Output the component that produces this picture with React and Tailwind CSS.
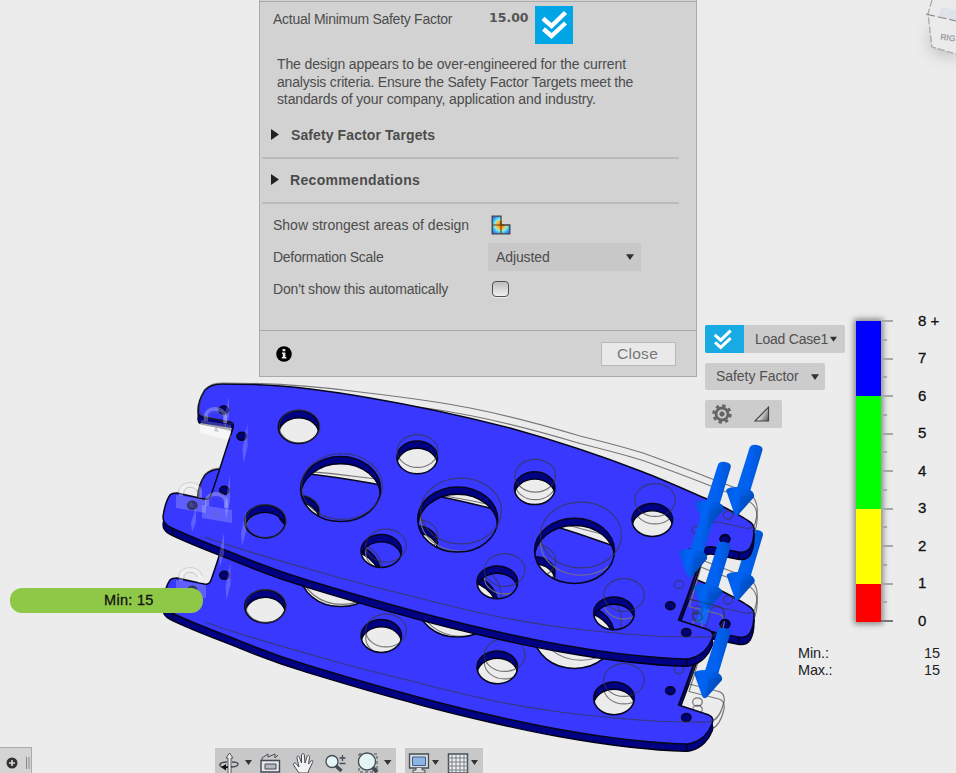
import React from 'react';

const FACE =
  'M198 411 C198 403 201 396 205 390 C210 385 215 384 222 384 C258 384 288 386 310 389 C330 391.3 350 394.5 370 398 C420 406.500 465 416.500 510 428 C555 440.500 602 456 643 472 C665 480.500 686 490 707 499 C722 506 738 514 747 520 C752 523 755 526 754 530 C754 537 753 543 750 548 C747 552 743 553 738 552 L713 547 C707 546 704 548 702 552 C700 562 688 595 678.5 620 L706 629 C712 631 714 633 712 639 C709 647 702 655 692 658 C689 659 689 659 686 659 C645 658 602 652 560 644.500 C537 640.500 514 635.500 490 630 C462 623.500 435 617 407 609 C375 600.500 340 590 307 580 C284 573 262 565 240 556 C215 546 190 537 170 527 C164 524 163 521 163 517 C164 509 166 501 170 495 C172 493 174 493 177 493 L204 499 C208 500 210 498 211 495 C216 482 224 455 233 428 C234 424 233 423 230 422 L203 417 C199 416 198 415 198 411 Z';

const GHOST =
  'M233 424 L203 416 C197 414 199 402 204 391 C209 384 216 383 224 383 C270 383 315 386 360 392 C398 396.500 435 401 470 408 C508 415.500 545 425.500 580 436 C602 441.500 624 447 643 453 C665 461 687 469 707 477 L733 487 C744 491 752 494 755 500 C759 507 757 517 755 524 C753 528 750 529 745 528 L718 522 C713 521 711 523 710 526 C705 545 697 575 689 599 L717 606 C723 607 725 611 724 617 C722 625 718 634 712 636 C706 638 700 637 693 637 C670 637 648 636 627 634 C605 632 580 630 560 627 C537 624 513 620 490 615 C462 609 434 602 407 595 C378 588 350 581 323 573 C290 564 240 550 205 537';

const SMALL = [
  [298.6, 427], [417.2, 457.4], [534.7, 488.2], [652.3, 520],
  [265, 521.5], [381.3, 551], [497.3, 582.3], [614, 613.3],
];
const BIG = [[340.6, 489], [457.7, 519.5], [574.5, 550.8]];
const DOTS = [
  [223.7, 410], [241.7, 436.3], [224.3, 490.3], [192.3, 505.3],
  [725, 539.5], [691.5, 553], [670.3, 605.7], [686.3, 632.5],
];
const GHOST_SMALL = [
  [299.5, 426.5], [417.5, 451], [535.3, 475.7], [655, 500],
  [266, 521], [386, 545.5], [504.7, 570], [624, 595],
];
const GHOST_BIG = [[342, 486.5], [461, 511], [581, 535]];
const GHOST_DOTS = [[728, 515], [697, 530], [679, 584.5], [697.5, 617]];

const ring = (x, y, rx, ry) =>
  `M${x - rx} ${y} a${rx} ${ry} 0 1 0 ${rx * 2} 0 a${rx} ${ry} 0 1 0 ${-rx * 2} 0 Z`;

const PLATE = [
  FACE,
  ...SMALL.map(([x, y]) => ring(x, y, 20.3, 16.4)),
  ...BIG.map(([x, y]) => ring(x, y, 40, 32.6)),
].join(' ');

const GHOST_ALL = [
  GHOST,
  ...GHOST_SMALL.map(([x, y]) => ring(x, y, 20.3, 16.4)),
  ...GHOST_BIG.map(([x, y]) => ring(x, y, 40.5, 32.8)),
  ...GHOST_DOTS.map(([x, y]) => ring(x, y, 4.8, 4.2)),
].join(' ');

function Plate({ y }) {
  return (
    <g transform={`translate(0 ${y})`} strokeLinejoin="round">
      <path d={GHOST_ALL} transform="translate(0 7.5)" fill="none" stroke="#777" strokeWidth="1.1" />
      <g fill="#000082" fillRule="evenodd">
        <path d={PLATE} transform="translate(0 7.3)" stroke="#000014" strokeWidth="1.4" />
        <path d={PLATE} transform="translate(0 5)" />
        <path d={PLATE} transform="translate(0 2.5)" />
        <path d={PLATE} fill="#3838ff" stroke="#06061c" strokeWidth="1.5" />
      </g>
      <path d="M173 528 V536 M687 659 V666 M739 552 V560" stroke="#000" />
      {DOTS.map(([cx, cy]) => (
        <ellipse key={cx} cx={cx} cy={cy} rx="4.7" ry="4" fill="#000078" stroke="#05051e" strokeWidth="1.5" />
      ))}
      <path d={GHOST_ALL} fill="none" stroke="#383838" strokeOpacity="0.65" strokeWidth="1.2" />
    </g>
  );
}

function Arrow({ x, y, start = -69 }) {
  const sx = (-start * 20) / 69;
  return (
    <g transform={`translate(${x} ${y})`}>
      <path
        d={`M${sx - 6.5} ${start + 2} Q${sx - 5} ${start - 2} ${sx + 1} ${start - 1} Q${sx + 7} ${start} ${sx + 6.5} ${start + 4} L13 -20 L0 -24 Z`}
        fill="url(#shaft)"
      />
      <path d="M-10 -25 Q-8 -28 1 -28 L14 -25 Q19 -22 18 -18 L3 -1 Q0 2 -2 -2 Z" fill="url(#head)" />
      <path d="M5 -19 L18 -20 L18 -18 L2 0 Z" fill="#0048b4" opacity="0.4" />
    </g>
  );
}

function Lock({ x, y }) {
  return (
    <g transform={`translate(${x} ${y})`}>
      <path d="M-14 0 L16 5 L16 18 L-14 13 Z" fill="#fff" opacity="0.2" />
      <path d="M-9 1 V-5 C-7 -13 8 -13 10 -4 V3" fill="none" stroke="#fff" strokeWidth="4" opacity="0.28" />
      <path d="M-11 0 V-5 C-9 -15 10 -15 12 -4 M-6 0 V-4 C-5 -9 6 -9 7 -3" fill="none" stroke="#777" strokeWidth="0.7" opacity="0.4" />
      <path d="M-1 11 L1 6 L4 12 Z" fill="#777" opacity="0.35" />
    </g>
  );
}

const GLINTS = [[229, 397, 32], [247.5, 423, 40], [230, 475, 44], [196, 507, 25], [246, 510, 36], [224, 533, 34], [230.5, 562, 38]];

function Model() {
  return (
    <svg className="absolute inset-0 h-[773px] w-[956px]" viewBox="0 0 956 773">
      <defs>
        <linearGradient id="shaft" x1="0" x2="1" y1="0.4" y2="0.6">
          <stop offset="0" stopColor="#0a62dc" />
          <stop offset="0.45" stopColor="#0062f5" />
          <stop offset="1" stopColor="#0052c8" />
        </linearGradient>
        <linearGradient id="head" x1="0" x2="1" y1="0" y2="0.3">
          <stop offset="0" stopColor="#0058d8" />
          <stop offset="0.4" stopColor="#0064f8" />
          <stop offset="1" stopColor="#0050c4" />
        </linearGradient>
        <filter id="soft" x="-60%" y="-60%" width="220%" height="220%">
          <feGaussianBlur stdDeviation="8" />
        </filter>
      </defs>

      <Plate y={85} />
      <Arrow x={736.5} y={600} />
      <Plate y={0} />

      {GLINTS.map(([x, y, h]) => (
        <path key={`${x}-${y}`} d={`M${x} ${y} L${x - 5} ${y + h * 0.65} L${x - 4} ${y + h} L${x} ${y + h * 0.6} Z`} fill="#fff" opacity="0.2" />
      ))}
      <path d="M200 423 L232 428 L228 440 L200 433 Z" fill="#fff" opacity="0.55" />
      <Lock x={215} y={420} />
      <Lock x={190} y={495} />
      <Lock x={216} y={505} />
      <Lock x={190} y={580} />

      <Arrow x={689} y={577} />
      <Arrow x={705.5} y={528} start={-65} />
      <Arrow x={736} y={515} />
      <Arrow x={704} y={612} />
      <Arrow x={704} y={698} />
      <path d="M700 608 L710 609 L706 624 L696 622 Z" fill="#0878ff" opacity="0.7" />
      <g fill="none" stroke="#303038" strokeOpacity="0.6">
        <ellipse cx="697.5" cy="617" rx="4.8" ry="4.2" />
        <ellipse cx="697.5" cy="610" rx="4.8" ry="4.2" />
        <path d="M689 599 L717 606 C723 607 725 611 724 617" />
        <path d="M720 540 C721 533 729 533 730 540 M720 625 C721 618 729 618 730 625" stroke="#000030" strokeOpacity="1" strokeWidth="2" />
      </g>

      <path d="M930 30 L932 50 L956 58 V30 Z" fill="#777" opacity="0.45" filter="url(#soft)" />
      <path d="M932 0 L928 14 L932 47 L956 54 V0 Z" fill="#ebebeb" />
      <path d="M941 7 L956 10 V21 L939 16 Z" fill="#dfe2e8" />
      <path d="M932 0 L928 14 L932 47 L956 54" fill="none" stroke="#aaa" strokeWidth="1.3" strokeDasharray="7 2" />
      <path d="M926 14 L956 21" stroke="#888" strokeWidth="1.2" strokeDasharray="9 3" />
      <text x="940" y="39.5" transform="rotate(8 940 39)" fontFamily="Liberation Sans, sans-serif" fontWeight="bold" fontSize="8.6" fill="#a0a0a8">RIG</text>
    </svg>
  );
}

function DoubleCheck({ className }) {
  return (
    <svg className={className} viewBox="0 0 38 38" fill="none" stroke="#fff" strokeWidth="4.4">
      <path d="M8 12.5 L16.5 20 L30.5 6.5" />
      <path d="M8.5 23 L16.5 30 L30.5 17" />
    </svg>
  );
}

function Caret({ className }) {
  return (
    <svg className={className} viewBox="0 0 8 6"><path d="M0 0.3 H8 L4 6 Z" fill="#303030" /></svg>
  );
}

function Section({ title, className }) {
  return (
    <div className={className}>
      <svg className="h-[11px] w-2" viewBox="0 0 8 11"><path d="M0 0 L8 5.5 L0 11 Z" fill="#222" /></svg>
      <span>{title}</span>
    </div>
  );
}

function ResultDialog() {
  return (
    <section className="flex h-[377px] w-[438px] shrink-0 flex-col border border-t-0 border-[#aaaaaa] bg-[#d2d2d2] text-[14px] leading-[18px] text-[#4c4c4c]">
      <div className="h-[2px] shrink-0 border-b border-[#aaaaaa]" />
      <div className="flex h-[42px] shrink-0 items-start pl-[13px] pt-1">
        <span className="mt-1 w-[216px] whitespace-nowrap tracking-[-0.27px]">Actual Minimum Safety Factor</span>
        <span className="mt-[3px] w-[46px] font-['DejaVu_Sans',sans-serif] text-[12.5px] font-bold text-[#555555]">15.00</span>
        <span className="h-[38px] w-[38px] bg-[#00a5e5]"><DoubleCheck className="h-[38px] w-[38px]" /></span>
      </div>
      <p className="mt-[12px] shrink-0 whitespace-pre pl-[17px] leading-[17.5px]">
        <span className="block tracking-[-0.12px]">The design appears to be over-engineered for the current</span>
        <span className="block tracking-[-0.18px]">analysis criteria. Ensure the Safety Factor Targets meet the</span>
        <span className="block tracking-[-0.13px]">standards of your company, application and industry.</span>
      </p>
      <Section title="Safety Factor Targets" className="mt-[17px] flex shrink-0 items-center gap-3 pl-[11px] font-bold tracking-[0.1px]" />
      <div className="ml-[2px] mr-[17px] mt-[13px] h-[2px] shrink-0 bg-[#bbbbbb]" />
      <Section title="Recommendations" className="mt-3 flex shrink-0 items-center gap-[11px] pl-[11px] font-bold tracking-[0.33px]" />
      <div className="ml-[2px] mr-[17px] mt-[13px] h-[2px] shrink-0 bg-[#bbbbbb]" />
      <div className="mt-[5px] flex h-[32px] shrink-0 items-center pl-[13px]">
        <span className="w-[218px] whitespace-nowrap">Show strongest areas of design</span>
        <svg className="h-[20px] w-[20px]" viewBox="0 0 20 20">
          <defs>
            <radialGradient id="heat" gradientUnits="userSpaceOnUse" cx="10" cy="10" r="11">
              <stop offset="0" stopColor="#ff7000" /><stop offset="0.35" stopColor="#ffb52c" />
              <stop offset="0.55" stopColor="#8af0e0" /><stop offset="0.75" stopColor="#38b8ff" /><stop offset="1" stopColor="#3a62ee" />
            </radialGradient>
          </defs>
          <path d="M1.2 1.2 H10 V10 H18.8 V18.8 H1.2 Z" fill="url(#heat)" stroke="#444" strokeWidth="1.3" />
          <path d="M1 10 H13 M10 6 V19" stroke="#713c0c" strokeWidth="1.2" />
        </svg>
      </div>
      <div className="flex h-[32px] shrink-0 items-center pl-[13px]">
        <span className="w-[215px] tracking-[-0.28px]">Deformation Scale</span>
        <div className="flex h-[28px] w-[153px] items-center justify-between bg-[#c8c8c8] pl-[8px] pr-[7px]">
          <span className="tracking-[-0.1px]">Adjusted</span><Caret className="h-[6px] w-[8px]" />
        </div>
      </div>
      <div className="flex h-[32px] shrink-0 items-center pl-[13px]">
        <span className="w-[219px] tracking-[-0.17px]">Don't show this automatically</span>
        <span className="h-[16px] w-[17px] rounded-[4px] border-[1.5px] border-[#505050] bg-gradient-to-b from-[#bdbdbd] to-[#f0f0f0] shadow-[0_1px_0_#eeeeee]" />
      </div>
      <footer className="mt-auto flex h-[46px] shrink-0 items-center justify-between border-t border-[#aaaaaa] pl-4 pr-5">
        <svg className="h-4 w-4" viewBox="0 0 16 16">
          <circle cx="8" cy="8" r="7.8" fill="#000" />
          <path d="M6.5 3 H9.3 V5.2 H6.5 Z M6 6.6 H9.4 V11 H10.4 V12.6 H5.8 V11 H6.8 V8.1 H6 Z" fill="#e5e5e5" />
        </svg>
        <button className="flex h-[24px] w-[75px] items-center justify-center border border-[#b8b8b8] bg-[#e9e9e9] pr-[2px] text-[15.5px] tracking-[0.3px] text-[#777777]">Close</button>
      </footer>
    </section>
  );
}

function Controls() {
  return (
    <div className="mt-1 flex w-[140px] shrink-0 flex-col items-start gap-[10px] text-[14px] text-[#505050]">
      <div className="flex h-[28px] w-[140px] items-center rounded-[2px] bg-[#cccccc]">
        <span className="flex h-[28px] w-[39px] items-center justify-center rounded-l-[2px] bg-[#18aae3] pr-[4px]"><DoubleCheck className="h-[27px] w-[27px]" /></span>
        <span className="ml-[11px] whitespace-nowrap tracking-[-0.25px]">Load Case1</span>
        <Caret className="ml-[2px] h-[6px] w-[7px]" />
      </div>
      <div className="flex h-[27px] w-[120px] items-center justify-between rounded-[2px] bg-[#cccccc] pl-[11px] pr-[6px]">
        <span className="whitespace-nowrap tracking-[-0.05px]">Safety Factor</span>
        <Caret className="h-[6px] w-[8px]" />
      </div>
      <div className="flex h-[28px] w-[77px] items-center gap-[22px] rounded-[2px] bg-[#cccccc] pl-[7px]">
        <svg className="h-[20px] w-[20px]" viewBox="0 0 20 20" fill="none" stroke="#646464">
          <circle cx="10" cy="10" r="6" strokeWidth="2.8" />
          <circle cx="10" cy="10" r="8.3" strokeWidth="2.8" strokeDasharray="3.26 3.26" />
          <circle cx="10" cy="10" r="2.2" fill="#646464" strokeWidth="1" />
        </svg>
        <svg className="h-[16px] w-[16px]" viewBox="0 0 16 16">
          <defs><linearGradient id="tri" x1="0" y1="0.4" x2="1" y2="1"><stop offset="0.3" stopColor="#f0f0f0" /><stop offset="1" stopColor="#555" /></linearGradient></defs>
          <path d="M1 15 L14.5 1.2 V15 Z" fill="url(#tri)" stroke="#444" strokeWidth="1.2" />
        </svg>
      </div>
    </div>
  );
}

const TICKS = Array.from({ length: 17 }, (_, i) => i);
const LABELS = ['8 +', '7', '6', '5', '4', '3', '2', '1', '0'];

function Legend() {
  return (
    <div className="ml-[11px] flex text-[15px] text-[#111111]">
      <div className="flex h-[301px] w-[25px] flex-col shadow-[0_0_6px_2px_rgba(0,0,0,0.45)]">
        <div className="h-[75px] bg-[#0000ff]" />
        <div className="h-[113px] bg-[#00ff00]" />
        <div className="h-[75px] bg-[#ffff00]" />
        <div className="h-[38px] bg-[#ff0000]" />
      </div>
      <div className="-mt-px flex h-[302px] w-[12px] flex-col justify-between">
        {TICKS.map((i) => (
          <span key={i} className={i === 16 ? 'h-[2px] w-[12px] bg-[#777777]' : i % 2 ? 'h-[2px] w-[6px] bg-[#a8a8a8]' : 'h-[2px] w-[12px] bg-[#a8a8a8]'} />
        ))}
      </div>
      <div className="-mt-[19px] ml-[25px] h-[320px]">
        {LABELS.map((l) => (
          <div key={l} className="flex h-[37.5px] items-center whitespace-nowrap [-webkit-text-stroke:0.3px_#111111]">{l}</div>
        ))}
      </div>
    </div>
  );
}

function NavBar() {
  return (
    <footer className="flex h-[26px] items-start">
      <div className="flex h-[26px] w-[32px] items-center border-r border-t border-[#aaaaaa] bg-[#d4d4d4] pl-[6px] pt-1">
        <svg className="h-[12px] w-[24px]" viewBox="0 0 24 12">
          <circle cx="6" cy="6" r="5.5" fill="#333" /><path d="M3 6 H9 M6 3 V9" stroke="#ddd" strokeWidth="1.6" />
          <path d="M20.5 0 V12 M23 0 V12" stroke="#888" />
        </svg>
      </div>
      <div className="ml-[183px] mt-px h-[25px] w-[181px] bg-[#c8c8c8]">
        <svg className="h-[25px] w-[181px]" viewBox="0 0 181 25" fill="none" stroke="#444c55">
          <path d="M12 14 C3 14 3 19 9 19 H17 C25 18 25 14 17 14" strokeWidth="1.4" />
          <path d="M13 25 V10 H11 L14.500 5 L18 10 H16 V25" fill="#eee" strokeWidth="0.9" />
          <path d="M6 19.300 L11 16 V22.500 Z" fill="#111" stroke="none" /><path d="M9 19.300 H13" stroke="#111" strokeWidth="1.5" />
          <path d="M30 12 H37 L33.500 17 Z M169 12 H176.500 L172.700 17 Z" fill="#333" stroke="none" />
          <path d="M46 12.500 H64.500 V24 H46 Z" fill="#e4e6e8" strokeWidth="1.4" /><path d="M50 16 H61 V21 H50 Z" fill="#b5b8c0" />
          <path d="M47 12 V10 L53 6 V9 L60 6 V10 L63 7" />
          <path d="M84 25 L78.500 17 C78 15 80 14 81.500 16 L84 19 L82 10 C82 7.500 84 7.500 84.500 9.500 L86.500 15 V7 C87 5 89 5 89.300 7 L90 15 L92 8.500 C93 6.500 95 7.500 94.500 9.500 L93.500 16 L96 13 C97.500 11.500 98.500 13 97.500 14.500 L94 22 L93 25 Z" fill="#f2f2f2" />
          <path d="M121 18 L126.500 23" strokeWidth="3.5" /><circle cx="117" cy="13.500" r="6" fill="#e4f3f4" strokeWidth="1.3" />
          <path d="M124.500 10 H130.500 M127.500 7 V13 M124.500 15.500 H130.500" strokeWidth="1.3" />
          <path d="M144 6 H162 V24 H144 Z" strokeDasharray="3 2" /><path d="M157 19 L162 24" strokeWidth="4" />
          <circle cx="152" cy="13.500" r="8.500" fill="#e4f5f5" strokeWidth="1.300" />
        </svg>
      </div>
      <div className="ml-[9px] mt-px h-[25px] w-[78px] bg-[#c8c8c8]">
        <svg className="h-[25px] w-[78px]" viewBox="0 0 78 25" fill="none" stroke="#444c55">
          <path d="M4.500 6 H23.500 V20 H4.500 Z" fill="#ddd" strokeWidth="1.3" /><path d="M7.500 9 H20.500 V17.500 H7.500 Z" fill="#8db4e2" stroke="#3c5f92" />
          <path d="M11 20 V22 H8 V25 H20 V22 H17 V20" fill="#ddd" />
          <path d="M27 12 H34 L30.500 17 Z M66 12 H73 L69.500 17 Z" fill="#333" stroke="none" />
          <path d="M43.500 6 H62.500 V25 H43.500 Z" fill="#eee" strokeWidth="1.500" />
          <path d="M47 6 V25 M51 6 V25 M55 6 V25 M59 6 V25 M43 10 H63 M43 14 H63 M43 18 H63 M43 22 H63" stroke="#777f88" />
        </svg>
      </div>
    </footer>
  );
}

export default function App() {
  return (
    <main className="relative h-[773px] w-[956px] overflow-hidden bg-[#ececec] font-['Liberation_Sans',Arial,sans-serif]">
      <Model />
      <div className="absolute left-[10px] top-[588px] flex h-[25px] w-[193px] items-center rounded-[12px] bg-[#8fc846] pl-[94px] text-[14.5px] tracking-[0.3px] text-[#111111] [-webkit-text-stroke:0.3px_#111111]">Min: 15</div>
      <div className="relative flex h-full flex-col justify-between">
        <div className="flex items-start pl-[259px]">
          <ResultDialog />
          <div className="ml-2 flex w-[251px] shrink-0 flex-col pt-[321px]">
            <div className="flex h-[324px] items-start">
              <Controls />
              <Legend />
            </div>
            <div className="grid grid-cols-[126px_auto] justify-start pl-[93px] text-[14.5px] leading-[17px] text-[#222222]">
              <span className="tracking-[-0.1px]">Min.:</span><span>15</span>
              <span className="tracking-[-0.2px]">Max.:</span><span>15</span>
            </div>
          </div>
        </div>
        <NavBar />
      </div>
    </main>
  );
}
